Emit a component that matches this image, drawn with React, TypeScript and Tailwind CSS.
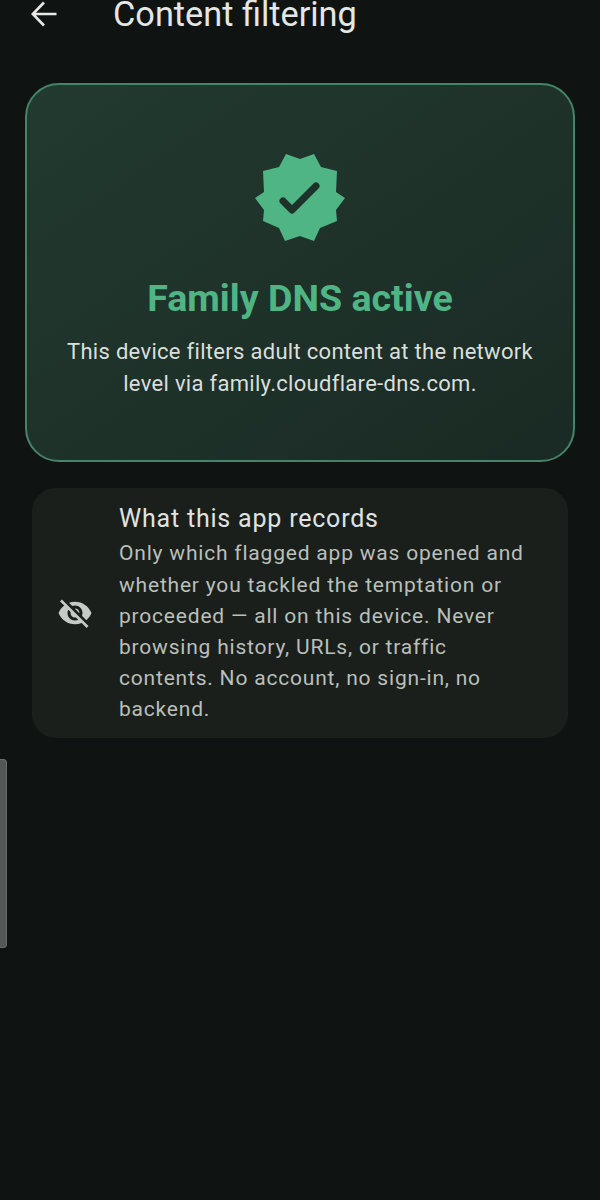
import { MdVisibilityOff } from 'react-icons/md'

export default function App() {
  return (
    <div className="relative h-[1200px] w-[600px] overflow-hidden bg-[#0f1413] font-['Roboto',sans-serif]">
      <div className="flex h-[28px] items-center pl-[31px]">
        <svg width="26" height="26" viewBox="0 0 26 26" fill="none" stroke="#e6e9e6" strokeWidth="2.6">
          <path d="M25.5 13H2M13 1.5 1.8 13 13 24.5" />
        </svg>
        <div className="ml-[56px] text-[34.3px] leading-[28px] text-[#e4e7e4]">Content filtering</div>
      </div>

      <div className="mx-[25px] mt-[55px] flex h-[379px] flex-col items-center rounded-[34px] border-2 border-[#458468] bg-gradient-to-br from-[#223a30] to-[#1a2a24] pt-[69px]">
        <svg width="90" height="87" viewBox="255 154 90 87">
          <path fill="#4fb585" d="M286 154 300 159 314 154 321 167 337 171 336 192 345 198 336 210 337 221 320 228 314 241 300 236 285 241 279 228 263 221 264 210 255 198 264 192 263 171 279 167Z" />
          <path fill="none" stroke="#1d3229" strokeWidth="7" strokeLinecap="round" strokeLinejoin="round" d="M283 201 292 210 316 186" />
        </svg>
        <div className="mt-[35px] text-[37.6px] leading-[45px] font-bold text-[#4fb585]">Family DNS active</div>
        <div className="mt-[15px] w-[500px] text-center text-[22px] leading-[31.5px] tracking-[0.3px] text-[#dadfdb]">
          This device filters adult content at the network level via family.cloudflare-dns.com.
        </div>
      </div>

      <div className="mx-[32px] mt-[26px] flex h-[250px] items-center rounded-[24px] bg-[#1a1f1c]">
        <div className="flex w-[87px] justify-center pr-[2px]">
          <MdVisibilityOff size={36} color="#c4cac5" />
        </div>
        <div className="w-[410px] pt-[4px]">
          <div className="text-[25px] leading-[30px] tracking-[0.8px] text-[#e0e3e0]">What this app records</div>
          <div className="mt-[4px] text-[21px] leading-[31.2px] tracking-[0.8px] text-[#b9bfba]">
            Only which flagged app was opened and whether you tackled the temptation or proceeded — all on this device. Never browsing history, URLs, or traffic contents. No account, no sign-in, no backend.
          </div>
        </div>
      </div>

      <div className="absolute left-0 top-[759px] h-[189px] w-[7px] rounded-r-[4px] border border-l-0 border-[#6a6e6b] bg-[#535755]" />
    </div>
  )
}
